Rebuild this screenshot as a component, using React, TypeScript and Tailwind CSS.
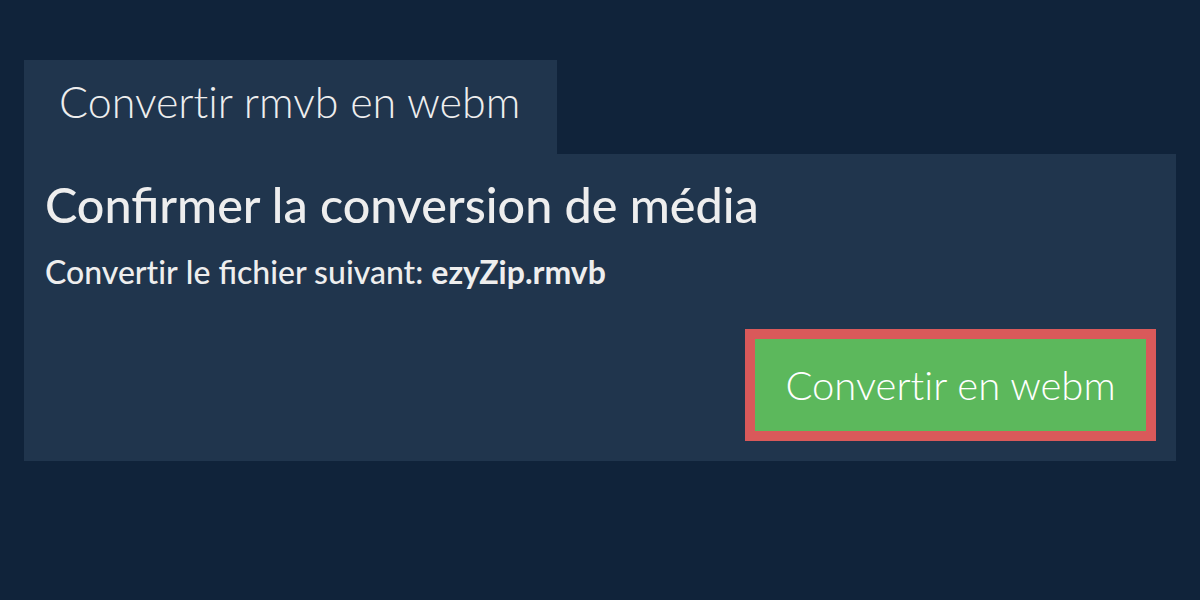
export default function App() {
  return (
    <div className="w-[1200px] h-[600px] bg-[#10233a] pt-[60px] px-6 font-['Lato','Liberation_Sans',sans-serif] text-[#eeeeee]">
      <div className="flex">
        <div className="bg-[#20354d] h-[94px] pl-[35px] pr-[37px] pt-[20px]">
          <span className="block text-[43px] font-light leading-none [font-variant-ligatures:none]">Convertir rmvb en webm</span>
        </div>
      </div>
      <div className="bg-[#20354d] h-[307px] px-[21px] pt-[26px] flex flex-col">
        <h1 className="text-[48.5px] font-medium leading-none">Confirmer la conversion de média</h1>
        <p className="text-[32px] font-medium mt-[27px] leading-none">
          <span className="[font-variant-ligatures:none]">Convertir</span> le fichier suivant: <b className="font-bold">ezyZip.rmvb</b>
        </p>
        <div className="flex justify-end mt-[41px] -mr-[1px]">
          <button className="bg-[#5cb85c] border-[10px] border-[#d9595a] w-[411px] h-[112px] text-white text-[40px] font-light leading-none [font-variant-ligatures:none]">
            Convertir en webm
          </button>
        </div>
      </div>
    </div>
  );
}
